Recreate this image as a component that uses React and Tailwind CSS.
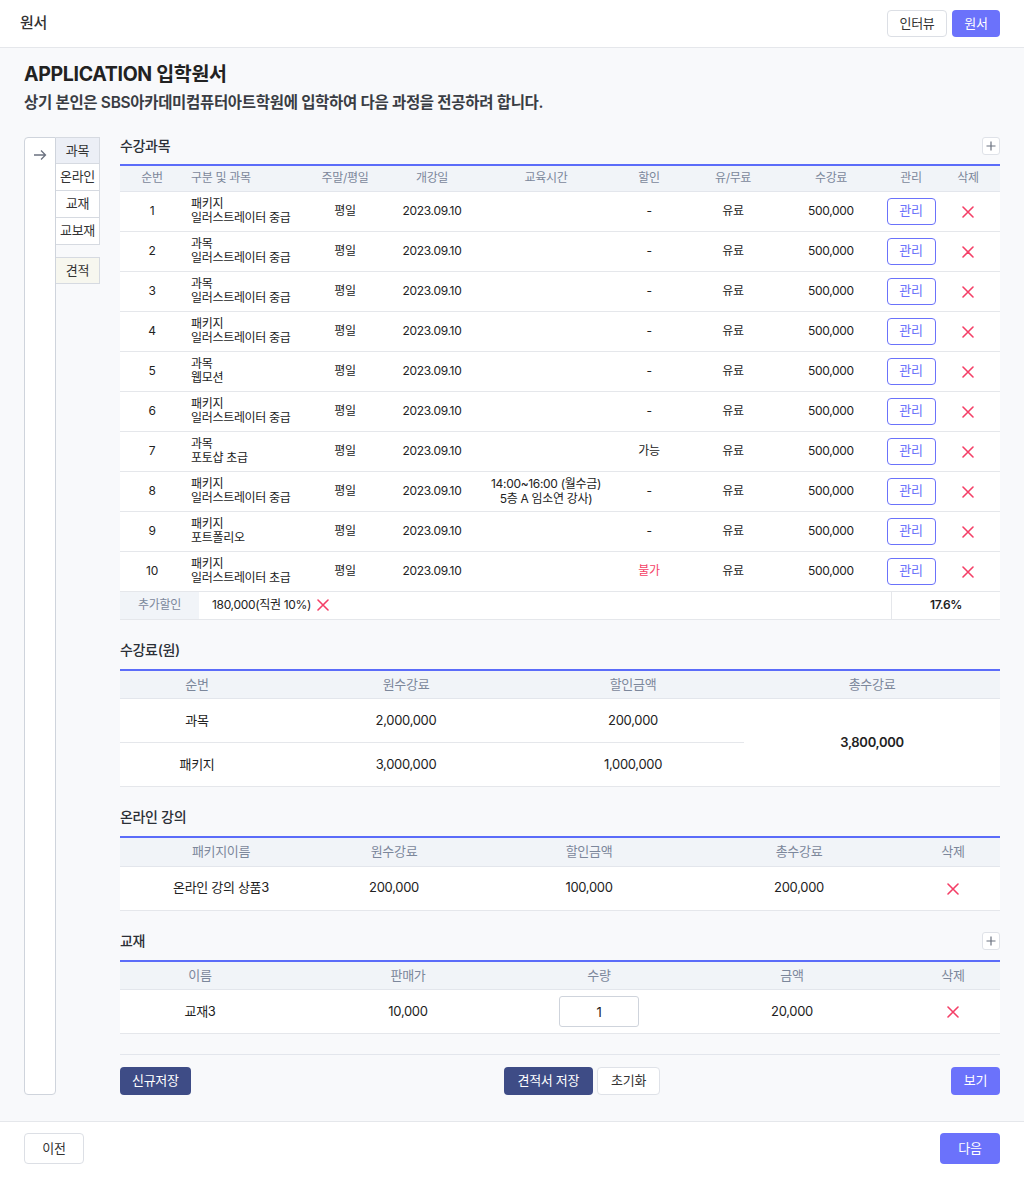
import React from "react";

const courses = [
  { no: 1, type: "패키지", name: "일러스트레이터 중급", day: "평일", date: "2023.09.10", time: "", sale: "-", paid: "유료", fee: "500,000" },
  { no: 2, type: "과목", name: "일러스트레이터 중급", day: "평일", date: "2023.09.10", time: "", sale: "-", paid: "유료", fee: "500,000" },
  { no: 3, type: "과목", name: "일러스트레이터 중급", day: "평일", date: "2023.09.10", time: "", sale: "-", paid: "유료", fee: "500,000" },
  { no: 4, type: "패키지", name: "일러스트레이터 중급", day: "평일", date: "2023.09.10", time: "", sale: "-", paid: "유료", fee: "500,000" },
  { no: 5, type: "과목", name: "웹모션", day: "평일", date: "2023.09.10", time: "", sale: "-", paid: "유료", fee: "500,000" },
  { no: 6, type: "패키지", name: "일러스트레이터 중급", day: "평일", date: "2023.09.10", time: "", sale: "-", paid: "유료", fee: "500,000" },
  { no: 7, type: "과목", name: "포토샵 초급", day: "평일", date: "2023.09.10", time: "", sale: "가능", paid: "유료", fee: "500,000" },
  { no: 8, type: "패키지", name: "일러스트레이터 중급", day: "평일", date: "2023.09.10", time: "14:00~16:00 (월수금)\n5층 A 임소연 강사)", sale: "-", paid: "유료", fee: "500,000" },
  { no: 9, type: "패키지", name: "포트폴리오", day: "평일", date: "2023.09.10", time: "", sale: "-", paid: "유료", fee: "500,000" },
  { no: 10, type: "패키지", name: "일러스트레이터 초급", day: "평일", date: "2023.09.10", time: "", sale: "불가", paid: "유료", fee: "500,000" },
];

// red cross used for delete
function RedX({ size = 12 }) {
  return (
    <svg width={size} height={size} viewBox="0 0 12 12" className="inline-block">
      <path d="M1 1L11 11M11 1L1 11" stroke="#f43f67" strokeWidth="1.6" strokeLinecap="round" />
    </svg>
  );
}

function PlusBtn() {
  return (
    <button className="w-[18px] h-[18px] flex items-center justify-center bg-white border border-[#dfe2e8] rounded-[3px]">
      <svg width="10" height="10" viewBox="0 0 10 10">
        <path d="M5 0.5V9.5M0.5 5H9.5" stroke="#6b7280" strokeWidth="1.2" />
      </svg>
    </button>
  );
}

function SectionTitle({ title, plus, className = "" }) {
  return (
    <div className={"flex items-start justify-between " + className}>
      <h3 className="text-[14px] leading-[18px] font-medium text-[#2b2f36]">{title}</h3>
      {plus && <PlusBtn />}
    </div>
  );
}

const th = "h-[26px] text-[12px] font-normal text-[#7c879b] bg-[#f1f4f8] border-b border-[#e3e6ec]";
const th2 = "h-[29px] text-[13px] font-normal text-[#7c879b] bg-[#f1f4f8] border-b border-[#e3e6ec]";

export default function App() {
  return (
    <div
      className="min-h-screen flex flex-col bg-[#f8f9fb] text-[#222] tracking-[-0.02em]"
      style={{ fontFamily: 'Inter, "Noto Sans CJK KR", sans-serif' }}
    >
      {/* header */}
      <header className="h-[48px] bg-white border-b border-[#e5e7eb] px-5 flex items-center justify-between">
        <h2 className="text-[15px] font-medium text-[#333]">원서</h2>
        <div className="flex gap-[5px] mr-[4px]">
          <button className="h-[27px] w-[60px] text-[13px] bg-white border border-[#dcdfe5] rounded-[4px] text-[#333]">인터뷰</button>
          <button className="h-[27px] w-[48px] text-[13px] bg-[#6b72fb] rounded-[4px] text-white">원서</button>
        </div>
      </header>

      <main className="flex-1 px-6 pt-[12px] pb-[24px]">
        <h1 className="text-[19.5px] leading-[28px] font-bold text-[#222]">APPLICATION 입학원서</h1>
        <p className="mt-[3px] text-[15.5px] leading-[24px] font-semibold text-[#3a3d44]">
          상기 본인은 SBS아카데미컴퓨터아트학원에 입학하여 다음 과정을 전공하려 합니다.
        </p>

        <div className="mt-[22px] flex items-stretch">
          {/* side nav */}
          <div className="w-[32px] bg-white border border-[#cfd4dc] rounded-l-[4px] rounded-br-[4px] flex justify-center pt-[10px]">
            <svg width="14" height="14" viewBox="0 0 14 14">
              <path d="M1 7H12.5M8 2.5L12.5 7L8 11.5" stroke="#6b7280" strokeWidth="1.3" fill="none" />
            </svg>
          </div>
          <div className="w-[44px] flex flex-col text-[13px] text-[#333]">
            <div className="h-[27px] flex items-center justify-center bg-[#eceff6] border border-l-0 border-[#d6dae1]">과목</div>
            <div className="h-[27px] flex items-center justify-center bg-white border border-t-0 border-l-0 border-[#d6dae1]">온라인</div>
            <div className="h-[27px] flex items-center justify-center bg-white border border-t-0 border-l-0 border-[#d6dae1]">교재</div>
            <div className="h-[27px] flex items-center justify-center bg-white border border-t-0 border-l-0 border-[#d6dae1]">교보재</div>
            <div className="mt-[12px] h-[27px] flex items-center justify-center bg-[#f7f7ef] border border-l-0 border-[#d6dae1]">견적</div>
          </div>

          {/* content */}
          <div className="flex-1 ml-[20px]">
            <SectionTitle title="수강과목" plus className="mb-[9px]" />
            <table className="w-full table-fixed border-collapse border-t-2 border-[#5b6cf9] text-[12px]">
              <colgroup>
                <col className="w-[64px]" />
                <col className="w-[122px]" />
                <col className="w-[78px]" />
                <col className="w-[96px]" />
                <col className="w-[132px]" />
                <col className="w-[74px]" />
                <col className="w-[94px]" />
                <col className="w-[102px]" />
                <col className="w-[58px]" />
                <col className="w-[60px]" />
              </colgroup>
              <thead>
                <tr>
                  <th className={th}>순번</th>
                  <th className={th + " text-left pl-[7px]"}>구분 및 과목</th>
                  <th className={th}>주말/평일</th>
                  <th className={th}>개강일</th>
                  <th className={th}>교육시간</th>
                  <th className={th}>할인</th>
                  <th className={th}>유/무료</th>
                  <th className={th}>수강료</th>
                  <th className={th}>관리</th>
                  <th className={th + " pr-[4px]"}>삭제</th>
                </tr>
              </thead>
              <tbody>
                {courses.map((c) => (
                  <tr key={c.no} className="h-[40px] bg-white border-b border-[#e5e7eb] text-center">
                    <td>{c.no}</td>
                    <td className="text-left pl-[7px] leading-[14px]">
                      {c.type}
                      <br />
                      {c.name}
                    </td>
                    <td>{c.day}</td>
                    <td>{c.date}</td>
                    <td className="leading-[15px] whitespace-pre-line">{c.time}</td>
                    <td className={c.sale === "불가" ? "text-[#f43f67]" : ""}>{c.sale}</td>
                    <td>{c.paid}</td>
                    <td>{c.fee}</td>
                    <td>
                      <button className="h-[27px] w-[49px] border border-[#6b72fb] rounded-[4px] text-[13px] text-[#6b72fb] bg-white">관리</button>
                    </td>
                    <td className="pr-[4px]">
                      <RedX />
                    </td>
                  </tr>
                ))}
              </tbody>
            </table>
            <div className="h-[28px] flex bg-white border-b border-[#e5e7eb] text-[12px]">
              <div className="w-[79px] bg-[#f1f4f8] text-[#7c879b] flex items-center justify-center">추가할인</div>
              <div className="flex-1 flex items-center gap-[6px] pl-[13px]">
                180,000(직권 10%) <RedX />
              </div>
              <div className="w-[109px] border-l border-[#e5e7eb] flex items-center justify-center font-semibold">17.6%</div>
            </div>

            <SectionTitle title="수강료(원)" className="mt-[21px] mb-[10px]" />
            <table className="w-full table-fixed border-collapse border-t-2 border-[#5b6cf9] text-[13px]">
              <colgroup>
                <col className="w-[154px]" />
                <col className="w-[264px]" />
                <col className="w-[206px]" />
                <col className="w-[256px]" />
              </colgroup>
              <thead>
                <tr>
                  <th className={th2}>순번</th>
                  <th className={th2}>원수강료</th>
                  <th className={th2 + " pr-[16px]"}>할인금액</th>
                  <th className={th2}>총수강료</th>
                </tr>
              </thead>
              <tbody className="bg-white text-center">
                <tr className="h-[44px] border-b border-[#e5e7eb]">
                  <td>과목</td>
                  <td>2,000,000</td>
                  <td className="pr-[16px]">200,000</td>
                  <td rowSpan={2} className="font-semibold border-b border-[#e5e7eb]">3,800,000</td>
                </tr>
                <tr className="h-[44px] border-b border-[#e5e7eb]">
                  <td>패키지</td>
                  <td>3,000,000</td>
                  <td className="pr-[16px]">1,000,000</td>
                </tr>
              </tbody>
            </table>

            <SectionTitle title="온라인 강의" className="mt-[21px] mb-[10px]" />
            <table className="w-full table-fixed border-collapse border-t-2 border-[#5b6cf9] text-[13px]">
              <colgroup>
                <col className="w-[202px]" />
                <col className="w-[144px]" />
                <col className="w-[246px]" />
                <col className="w-[174px]" />
                <col className="w-[114px]" />
              </colgroup>
              <thead>
                <tr>
                  <th className={th2}>패키지이름</th>
                  <th className={th2}>원수강료</th>
                  <th className={th2}>할인금액</th>
                  <th className={th2}>총수강료</th>
                  <th className={th2 + " pl-[20px]"}>삭제</th>
                </tr>
              </thead>
              <tbody className="bg-white text-center">
                <tr className="h-[44px] border-b border-[#e5e7eb]">
                  <td>온라인 강의 상품3</td>
                  <td>200,000</td>
                  <td>100,000</td>
                  <td>200,000</td>
                  <td className="pl-[20px]">
                    <RedX />
                  </td>
                </tr>
              </tbody>
            </table>

            <SectionTitle title="교재" plus className="mt-[21px] mb-[10px]" />
            <table className="w-full table-fixed border-collapse border-t-2 border-[#5b6cf9] text-[13px]">
              <colgroup>
                <col className="w-[160px]" />
                <col className="w-[256px]" />
                <col className="w-[126px]" />
                <col className="w-[244px]" />
                <col className="w-[94px]" />
              </colgroup>
              <thead>
                <tr>
                  <th className={th2}>이름</th>
                  <th className={th2}>판매가</th>
                  <th className={th2}>수량</th>
                  <th className={th2 + " pl-[16px]"}>금액</th>
                  <th className={th2}>삭제</th>
                </tr>
              </thead>
              <tbody className="bg-white text-center">
                <tr className="h-[44px] border-b border-[#e5e7eb]">
                  <td>교재3</td>
                  <td>10,000</td>
                  <td>
                    <input
                      defaultValue="1"
                      className="w-[80px] h-[31px] border border-[#cfd4dc] rounded-[3px] text-center text-[13px] bg-white"
                    />
                  </td>
                  <td className="pl-[16px]">20,000</td>
                  <td>
                    <RedX />
                  </td>
                </tr>
              </tbody>
            </table>

            <div className="mt-[20px] border-t border-[#e3e6ec] pt-[12px] flex items-center">
              <button className="h-[28px] px-[12px] rounded-[4px] bg-[#3e4c86] text-white text-[13px]">신규저장</button>
              <div className="flex gap-[4px] ml-[313px]">
                <button className="h-[28px] px-[14px] rounded-[4px] bg-[#3e4c86] text-white text-[13px]">견적서 저장</button>
                <button className="h-[28px] px-[13px] rounded-[4px] bg-white border border-[#dfe2e8] text-[#333] text-[13px]">초기화</button>
              </div>
              <button className="ml-auto h-[28px] w-[49px] rounded-[4px] bg-[#6b72fb] text-white text-[13px]">보기</button>
            </div>
          </div>
        </div>
      </main>

      <footer className="h-[56px] bg-white border-t border-[#e5e7eb] px-6 pt-[11px] flex items-start justify-between">
        <button className="h-[31px] w-[60px] bg-white border border-[#dcdfe5] rounded-[4px] text-[13px] text-[#333]">이전</button>
        <button className="h-[31px] w-[60px] bg-[#6b72fb] rounded-[4px] text-[13px] text-white">다음</button>
      </footer>
    </div>
  );
}
